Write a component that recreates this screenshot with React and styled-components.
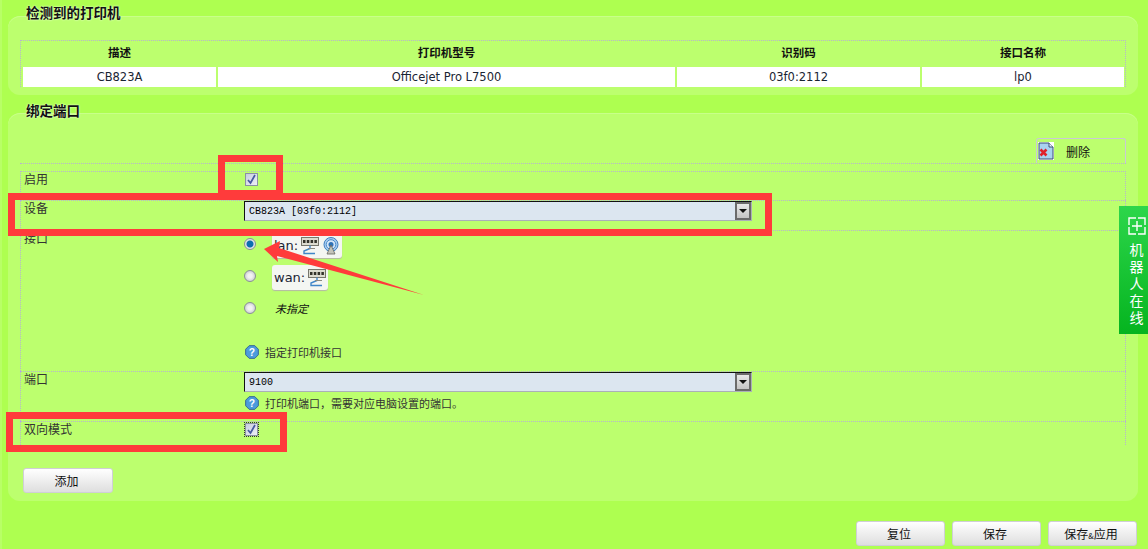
import React from "react";
import styled, { createGlobalStyle } from "styled-components";

const CJK = `"Noto Sans CJK SC", "Liberation Sans", sans-serif`;
const DOTTED = "1px dotted #b7b2cf";

const GlobalStyle = createGlobalStyle`
  html, body {
    margin: 0;
    padding: 0;
    height: 549px;
    overflow: hidden;
    background: #aeff50;
  }
`;

function NetworkIcon() {
  return (
    <svg width="18" height="18" viewBox="0 0 18 18">
      <rect x="0.5" y="0.5" width="17" height="8" fill="#dcdccf" stroke="#77776c" />
      <rect x="2" y="3" width="2.500" height="3" fill="#33332a" />
      <rect x="5.800" y="3" width="2.500" height="3" fill="#33332a" />
      <rect x="9.600" y="3" width="2.500" height="3" fill="#33332a" />
      <rect x="13.400" y="3" width="2.500" height="3" fill="#33332a" />
      <path d="M9 8.500v3L3 14v2.500h11" fill="none" stroke="#3f86c8" strokeWidth="1.400" />
      <path d="M7 11.500h7" stroke="#8a8a80" strokeWidth="1" />
    </svg>
  );
}

function WifiIcon() {
  return (
    <svg width="18" height="18" viewBox="0 0 18 18">
      <circle cx="9" cy="7.500" r="7" fill="#a9cdf0" stroke="#3f7fc0" />
      <circle cx="9" cy="7.500" r="4.800" fill="#d5e6f7" stroke="#4a8ccb" />
      <circle cx="9" cy="7.500" r="2.500" fill="#2f72b5" />
      <path d="M9 8L5 17h8z" fill="#c4c4ba" stroke="#66665e" strokeWidth="0.800" />
    </svg>
  );
}

function DeleteIcon() {
  return (
    <svg width="16" height="18" viewBox="0 0 16 18">
      <rect width="16" height="18" fill="#fff" />
      <path d="M1 1h10l4 4v12H1z" fill="#a9d2f0" stroke="#3c4f76" />
      <path d="M11 1v4h4" fill="#e8f3fb" stroke="#3c4f76" />
      <path d="M2.500 7.500l6 6M8.500 7.500l-6 6" stroke="#e0202a" strokeWidth="2.600" />
    </svg>
  );
}

function HelpIcon() {
  return (
    <svg width="14" height="14" viewBox="0 0 15 15">
      <path
        d="M4.500 .7h6l3.800 3.800v6l-3.800 3.800h-6L.7 10.500v-6z"
        fill="#4c9bdc"
        stroke="#2d5f96"
      />
      <text
        x="7.500"
        y="11.500"
        textAnchor="middle"
        fontSize="11"
        fontWeight="700"
        fontFamily="Liberation Sans, sans-serif"
        fill="#fff"
      >
        ?
      </text>
    </svg>
  );
}

function Check({ focused }) {
  return (
    <CheckBox $focused={focused}>
      <svg width="11" height="11" viewBox="0 0 11 11">
        <path d="M2 6l2.500 3L9 1" fill="none" stroke="#4658a0" strokeWidth="1.700" />
      </svg>
    </CheckBox>
  );
}

function App() {
  return (
    <Page>
      <GlobalStyle />
      <Panel>
        <Legend>检测到的打印机</Legend>
        <PrinterTable>
          <HeadCell>描述</HeadCell>
          <HeadCell>打印机型号</HeadCell>
          <HeadCell>识别码</HeadCell>
          <HeadCell>接口名称</HeadCell>
          <Cell>CB823A</Cell>
          <Cell>Officejet Pro L7500</Cell>
          <Cell>03f0:2112</Cell>
          <Cell>lp0</Cell>
        </PrinterTable>
      </Panel>

      <BindPanel>
        <BindLegend>绑定端口</BindLegend>
        <Toolbar>
          <DeleteButton>
            <DeleteIcon />
            <span>删除</span>
          </DeleteButton>
        </Toolbar>
        <Form>
          <Row $height={29}>
            <Label>启用</Label>
            <Value>
              <Check />
            </Value>
          </Row>
          <Row $height={30}>
            <Label>设备</Label>
            <Value>
              <Select>
                <span>CB823A [03f0:2112]</span>
                <SelectArrow />
              </Select>
            </Value>
          </Row>
          <Row $height={141}>
            <Label>接口</Label>
            <Value>
              <Options>
                <Option>
                  <Radio $checked />
                  <Chip>
                    lan:
                    <NetworkIcon />
                    <WifiIcon />
                  </Chip>
                </Option>
                <Option>
                  <Radio />
                  <Chip>
                    wan:
                    <NetworkIcon />
                  </Chip>
                </Option>
                <Option>
                  <Radio />
                  <Unbound>未指定</Unbound>
                </Option>
              </Options>
              <HintFirst>
                <HelpIcon />
                指定打印机接口
              </HintFirst>
            </Value>
          </Row>
          <Row $height={50}>
            <Label>端口</Label>
            <Value>
              <Select>
                <span>9100</span>
                <SelectArrow />
              </Select>
              <Hint>
                <HelpIcon />
                打印机端口，需要对应电脑设置的端口。
              </Hint>
            </Value>
          </Row>
          <Row $height={24}>
            <Label>双向模式</Label>
            <Value>
              <Check focused />
            </Value>
          </Row>
        </Form>
        <AddButton>添加</AddButton>
      </BindPanel>

      <Footer>
        <ActionButton>复位</ActionButton>
        <ActionButton>保存</ActionButton>
        <ActionButton>
          保存<Amp>&</Amp>应用
        </ActionButton>
      </Footer>

      <Highlight $x={218} $y={155} $w={65} $h={42} />
      <Highlight $x={8} $y={193} $w={764} $h={43} />
      <Highlight $x={6} $y={412} $w={281} $h={40} />
      <Arrow width="170" height="70" viewBox="0 0 170 70">
        <path d="M2 11L18 3 17 10 162 57 15 18 16 24z" fill="#ff3b3b" />
      </Arrow>

      <SideTab>
        <svg width="18" height="18" viewBox="0 0 18 18">
          <path
            d="M1 8V1h7M10 1h7v7M17 10v7h-7M8 17H1v-7M9 4v10M4 9h10"
            fill="none"
            stroke="#fff"
            strokeWidth="1.400"
          />
        </svg>
        <SideText>机器人在线</SideText>
      </SideTab>
    </Page>
  );
}

const Page = styled.div`
  position: relative;
  width: 1148px;
  height: 549px;
  box-sizing: border-box;
  padding: 16px 10px 0 6px;
  border-left: 2px solid #b8ff66;
  overflow: hidden;
  font-family: ${CJK};
  font-size: 12px;
  color: #222;
`;

const Panel = styled.section`
  display: flow-root;
  height: 79px;
  box-sizing: border-box;
  padding: 0 12px;
  background: #bcff6e;
  border-radius: 12px;
  box-shadow: inset 0 1px 0 #c8ff8a;
`;

const BindPanel = styled(Panel)`
  height: 388px;
  margin-top: 18px;
`;

const Legend = styled.h3`
  margin: -12px 0 20px 6px;
  height: 16px;
  line-height: 16px;
  font-size: 13.500px;
  font-weight: 700;
  color: #111;
  text-shadow: 0 0 2px #fff;
`;

const BindLegend = styled(Legend)`
  margin-top: -11px;
  margin-bottom: 20px;
`;

const PrinterTable = styled.div`
  display: grid;
  grid-template-columns: 193px 457px 243px 202px;
  grid-template-rows: 26px 20px;
  column-gap: 2px;
  padding: 0 1px 0 2px;
  border: ${DOTTED};
  border-bottom: 0;
`;

const HeadCell = styled.div`
  display: flex;
  align-items: center;
  justify-content: center;
  padding-bottom: 4px;
  font-weight: 700;
  font-size: 11.500px;
  color: #111;
`;

const Cell = styled.div`
  display: flex;
  align-items: center;
  justify-content: center;
  background: #fff;
  font-family: "DejaVu Sans", sans-serif;
  font-size: 11.500px;
  color: #1a2433;
`;

const Toolbar = styled.div`
  display: flex;
  justify-content: flex-end;
  height: 25px;
`;

const DeleteButton = styled.div`
  display: flex;
  align-items: center;
  gap: 12px;
  width: 90px;
  box-sizing: border-box;
  padding-left: 1px;
  border: 1px solid #c9c9d6;
  border-bottom: 0;
  border-radius: 3px 3px 0 0;
  color: #111;
  font-size: 12px;
`;

const Form = styled.div`
  padding-top: 7px;
  border-top: ${DOTTED};
`;

const Row = styled.div`
  display: grid;
  grid-template-columns: 223px 1fr;
  height: ${(p) => p.$height}px;
  box-sizing: border-box;
  border-top: ${DOTTED};
  border-left: ${DOTTED};
  border-right: ${DOTTED};
`;

const Label = styled.div`
  padding: 0 0 0 3px;
  line-height: 13px;
  font-size: 12px;
  color: #333;
`;

const Value = styled.div`
  display: flex;
  flex-direction: column;
  align-items: flex-start;
`;

const CheckBox = styled.span`
  display: flex;
  align-items: center;
  justify-content: center;
  width: 13px;
  height: 13px;
  box-sizing: border-box;
  margin: 1px 0 0 1px;
  background: linear-gradient(135deg, #c6cddf, #eef0f6);
  border: 1px solid #8b91a3;
  outline: ${(p) => (p.$focused ? "1px dotted #333" : "none")};
`;

const Select = styled.div`
  display: flex;
  align-items: center;
  justify-content: space-between;
  width: 508px;
  height: 20px;
  box-sizing: border-box;
  padding-left: 4px;
  background: #dce6f0;
  border-top: 1px solid #111;
  border-left: 1px solid #111;
  border-bottom: 1px solid #aab0b8;
  border-right: 1px solid #aab0b8;
  font-family: "Liberation Mono", monospace;
  font-size: 10px;
  color: #000;
`;

const SelectArrow = styled.span`
  position: relative;
  width: 16px;
  height: 18px;
  box-sizing: border-box;
  background: linear-gradient(#e8e8e8, #c4c4c4);
  border: 2px solid #6b6b6b;

  &::after {
    content: "";
    position: absolute;
    left: 2px;
    top: 5px;
    border-left: 4px solid transparent;
    border-right: 4px solid transparent;
    border-top: 4px solid #111;
  }
`;

const Options = styled.div`
  display: flex;
  flex-direction: column;
  gap: 7px;
  padding-top: 2px;
`;

const Option = styled.div`
  display: flex;
  align-items: center;
  gap: 16px;
  min-height: 25px;
`;

const Radio = styled.span`
  width: 12px;
  height: 12px;
  margin-top: -3px;
  border-radius: 50%;
  border: 1px solid #8a8f98;
  box-sizing: border-box;
  background: ${(p) =>
    p.$checked
      ? "radial-gradient(circle, #0b6fb0 0 3px, #dfe3e8 4px)"
      : "radial-gradient(circle, #f2f2f2 0 2px, #c4c8cc 6px)"};
`;

const Chip = styled.span`
  display: flex;
  align-items: center;
  gap: 3px;
  height: 25px;
  box-sizing: border-box;
  padding: 0 2px;
  background: #f4f6f2;
  border-radius: 3px;
  box-shadow: 0 1px 1px #b5b8a8;
  font-family: "DejaVu Sans", sans-serif;
  font-size: 13px;
  color: #1a2433;
`;

const Unbound = styled.em`
  margin: -4px 0 0 3px;
  font-size: 11px;
  color: #111;
`;

const Hint = styled.div`
  display: flex;
  align-items: center;
  gap: 6px;
  margin: 3px 0 0 1px;
  font-size: 11px;
  color: #333;
`;

const HintFirst = styled(Hint)`
  margin-top: 22px;
`;

const Button = styled.button`
  width: 90px;
  height: 25px;
  padding: 0 3px 0 0;
  background: linear-gradient(#ffffff, #dedede);
  border: 1px solid #cfcfd6;
  border-radius: 3px;
  font-family: ${CJK};
  font-size: 12px;
  color: #111;
`;

const AddButton = styled(Button)`
  display: block;
  margin-top: 23px;
  margin-left: 3px;
`;

const Footer = styled.div`
  display: flex;
  justify-content: flex-end;
  gap: 7px;
  margin-top: 20px;
  padding-right: 1px;
`;

const ActionButton = styled(Button)`
  width: 89px;
`;

const Amp = styled.span`
  font-size: 8px;
`;

const Highlight = styled.div`
  position: absolute;
  left: ${(p) => p.$x - 2}px;
  top: ${(p) => p.$y}px;
  width: ${(p) => p.$w}px;
  height: ${(p) => p.$h}px;
  box-sizing: border-box;
  border: 7px solid #ff3b3b;
`;

const Arrow = styled.svg`
  position: absolute;
  left: 260px;
  top: 238px;
`;

const SideTab = styled.aside`
  position: absolute;
  left: 1117px;
  top: 206px;
  display: flex;
  flex-direction: column;
  align-items: center;
  width: 29px;
  height: 128px;
  box-sizing: border-box;
  padding: 11px 0 0 6px;
  background: linear-gradient(#2dd64b, #05b41f);
`;

const SideText = styled.div`
  width: 14px;
  margin-top: 6px;
  font-size: 14px;
  line-height: 17px;
  color: #fff;
  word-break: break-all;
`;

export default App;
